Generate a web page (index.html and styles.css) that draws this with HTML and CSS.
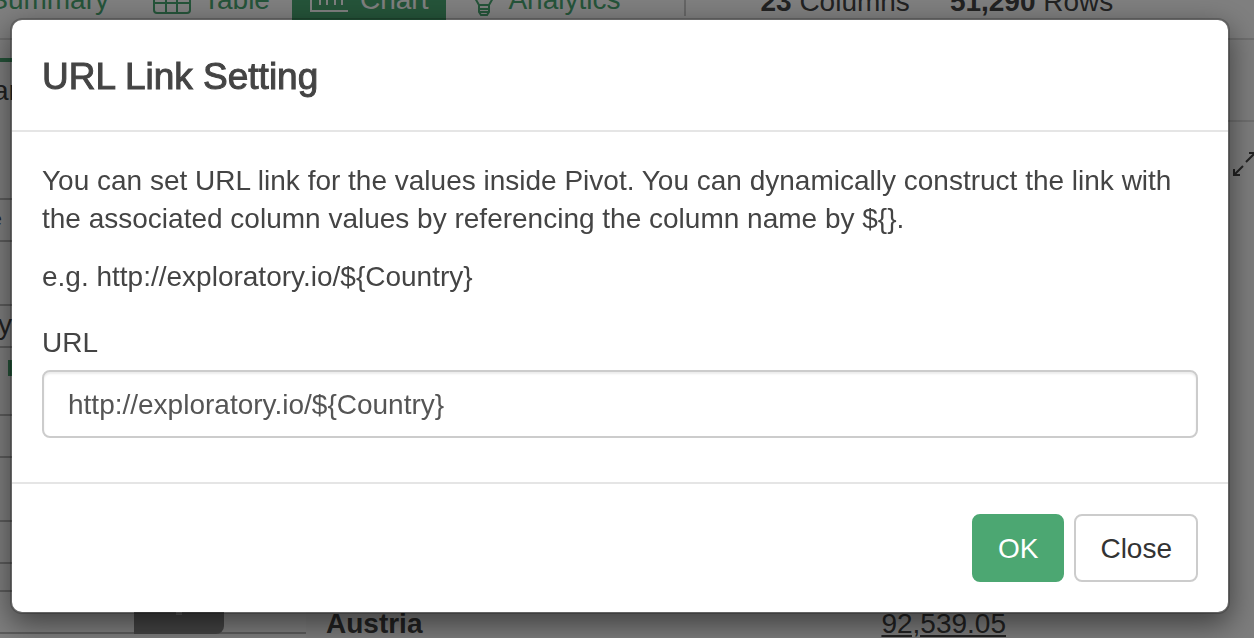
FILE: index.html
```html
<!DOCTYPE html>
<html lang="en">
<head>
<meta charset="utf-8">
<title>URL Link Setting</title>
<link rel="stylesheet" href="styles.css">
</head>
<body>
<div class="app">
  <header class="toolbar">
    <nav class="tabs">
      <a class="tab tab-first" href="#">Summary</a>
      <a class="tab" href="#">
        <svg class="icon" width="38" height="32" viewBox="0 0 38 32" fill="none" stroke="currentColor" stroke-width="2"><rect x="1" y="1" width="36" height="30" rx="3"/><path d="M1 11H37M1 21H37M13 1V31M24 1V31"/></svg>
        Table</a>
      <a class="tab tab-active" href="#">
        <svg class="icon" width="38" height="34" viewBox="0 0 38 34" fill="none" stroke="currentColor" stroke-width="2"><path d="M1 0V31H38M10 12V25M17 6V25M25 10V25M32 4V25"/></svg>
        Chart</a>
      <a class="tab tab-last" href="#">
        <svg class="icon icon-bulb" width="20" height="32" viewBox="0 0 20 32" fill="none" stroke="currentColor" stroke-width="2"><path d="M5 21L1 14A9 9 0 1 1 19 14L15 21ZM5 21V28L7 31H13L15 28V21M5 25H15M6 28H14"/></svg>
        Analytics</a>
    </nav>
    <span class="divider"></span>
    <div class="counts"><span><b>23</b> Columns</span><span><b>51,290</b> Rows</span></div>
  </header>
  <div class="workspace">
    <aside class="sidebar">
      <div class="row row-head"></div>
      <div class="row row-tall"><span class="clip clip-wide">Bar</span></div>
      <div class="row"><span class="clip clip-small">Title</span></div>
      <div class="row row-gap"></div>
      <div class="row"><span class="clip">y</span></div>
      <div class="row row-color"><span class="swatch"></span></div>
      <div class="row"></div>
      <div class="row row-gap"></div>
      <div class="row"></div>
      <div class="row row-thin"></div>
      <div class="row row-run"><span class="run"><span class="run-mark"></span></span></div>
    </aside>
    <main class="content">
      <div class="content-head"></div>
      <div class="view-tools">
        <svg width="21" height="24" viewBox="0 0 21 24" fill="none" stroke="currentColor" stroke-width="2"><path d="M1 17V23H7M1 23L10 14M13 10L22 1M16 1H22V7"/></svg>
      </div>
      <div class="pivot-row"><b>Austria</b><a class="value" href="#">92,539.05</a></div>
    </main>
  </div>
</div>
<div class="backdrop">
  <form class="modal" role="dialog" aria-labelledby="title">
    <header class="modal-header"><h1 class="modal-title" id="title">URL Link Setting</h1></header>
    <section class="modal-body">
      <p>You can set URL link for the values inside Pivot. You can dynamically construct the link with the associated column values by referencing the column name by ${}.</p>
      <p>e.g. http://exploratory.io/${Country}</p>
      <label class="label" for="url">URL</label>
      <input class="input" id="url" type="text" value="http://exploratory.io/${Country}">
    </section>
    <footer class="modal-footer">
      <button class="btn btn-primary" type="button">OK</button>
      <button class="btn" type="button">Close</button>
    </footer>
  </form>
</div>
</body>
</html>
```
FILE: styles.css
```css
* { box-sizing: border-box; }

body {
  margin: 0;
  overflow: hidden;
  background: #fff;
  color: #444;
  font: 28px/38px "Helvetica Neue", "Liberation Sans", Arial, sans-serif;
}

.app {
  display: flex;
  flex-direction: column;
  height: 100vh;
}

/* Toolbar */
.toolbar {
  display: flex;
  align-items: flex-end;
  flex: none;
  height: 40px;
  overflow: hidden;
  border-bottom: 2px solid #ddd;
}

.tabs { display: flex; }

.tab {
  display: flex;
  align-items: flex-end;
  gap: 12px;
  height: 80px;
  padding: 0 22px 24px 24px;
  color: #4aa873;
  text-decoration: none;
  line-height: 28px;
}

.icon { flex: none; }

.tab-first {
  width: 129px;
  padding-left: 0;
  padding-right: 20px;
  justify-content: flex-end;
}

.tab-active {
  padding-left: 18px;
  padding-right: 18px;
  background: #4aa873;
  color: #fff;
}

.tab-last {
  gap: 14px;
  padding-left: 28px;
  padding-right: 64px;
}

.icon-bulb { margin-bottom: -2px; }

.divider {
  width: 2px;
  height: 60px;
  margin-bottom: 22px;
  background: #ccc;
}

.counts {
  display: flex;
  gap: 40px;
  padding: 0 0 22px 74px;
  line-height: 28px;
  white-space: nowrap;
}

/* Workspace */
.workspace {
  display: flex;
  flex: 1;
  min-height: 0;
}

.sidebar {
  flex: none;
  width: 306px;
}

.row {
  height: 42px;
  overflow: hidden;
  border-bottom: 2px solid #bbb;
}

.row-head { height: 22px; border-bottom: 4px solid #4aa873; }
.row-tall { height: 138px; padding-top: 10px; }
.row-gap { height: 64px; }
.row-color { height: 68px; padding: 12px 0 0 8px; }
.row-thin { height: 28px; }

.clip {
  display: flex;
  justify-content: flex-end;
  width: 12px;
}

.clip-wide { width: 18px; }
.clip-small { width: 2px; font-size: 20px; }

.swatch {
  display: block;
  width: 30px;
  height: 16px;
  background: #4aa873;
}

.row-run {
  display: flex;
  justify-content: flex-end;
  padding-right: 82px;
  overflow: visible;
}

.run {
  display: flex;
  justify-content: center;
  align-items: center;
  width: 90px;
  height: 42px;
  border-radius: 0 0 8px 0;
  background: #888;
}

.run-mark {
  width: 6px;
  height: 4px;
  background: #bbb;
}

.content {
  display: flex;
  flex: 1;
  flex-direction: column;
  min-width: 0;
  background: #fafafa;
}

.content-head {
  flex: none;
  height: 82px;
  border-bottom: 2px solid #ddd;
}

.view-tools {
  display: flex;
  justify-content: flex-end;
  padding-top: 30px;
}

.pivot-row {
  display: flex;
  justify-content: space-between;
  width: 720px;
  margin-top: auto;
  padding: 0 20px;
  line-height: 28px;
}

.value { color: #444; }

/* Dialog */
.backdrop {
  position: fixed;
  inset: 0;
  padding: 18px 24px 24px 10px;
  background: rgba(0, 0, 0, 0.5);
}

.modal {
  border: 2px solid rgba(0, 0, 0, 0.2);
  border-radius: 12px;
  background: #fff;
  background-clip: padding-box;
  box-shadow: 0 10px 30px rgba(0, 0, 0, 0.5);
}

.modal-header {
  padding: 32px 30px 28px;
  border-bottom: 2px solid #e5e5e5;
}

.modal-title {
  margin: 0;
  font-size: 37px;
  font-weight: 500;
  line-height: 50px;
  -webkit-text-stroke: 1px currentColor;
}

.modal-body {
  padding: 30px 30px 44px;
}

.modal-body p { margin: 0 0 20px; }

.label {
  display: block;
  margin: 28px 0 8px;
}

.input {
  display: block;
  width: 100%;
  height: 68px;
  padding: 14px 24px 12px;
  border: 2px solid #ccc;
  border-radius: 8px;
  background: #fff;
  box-shadow: inset 0 2px 2px rgba(0, 0, 0, 0.08);
  color: #555;
  font: inherit;
}

.modal-footer {
  display: flex;
  justify-content: flex-end;
  gap: 10px;
  padding: 30px;
  border-top: 2px solid #e5e5e5;
}

.btn {
  height: 68px;
  padding: 2px 24px 0;
  border: 2px solid #ccc;
  border-radius: 8px;
  background: #fff;
  color: #333;
  font: inherit;
}

.btn-primary {
  border-color: #4ca772;
  background: #4ca772;
  color: #fff;
}
```
